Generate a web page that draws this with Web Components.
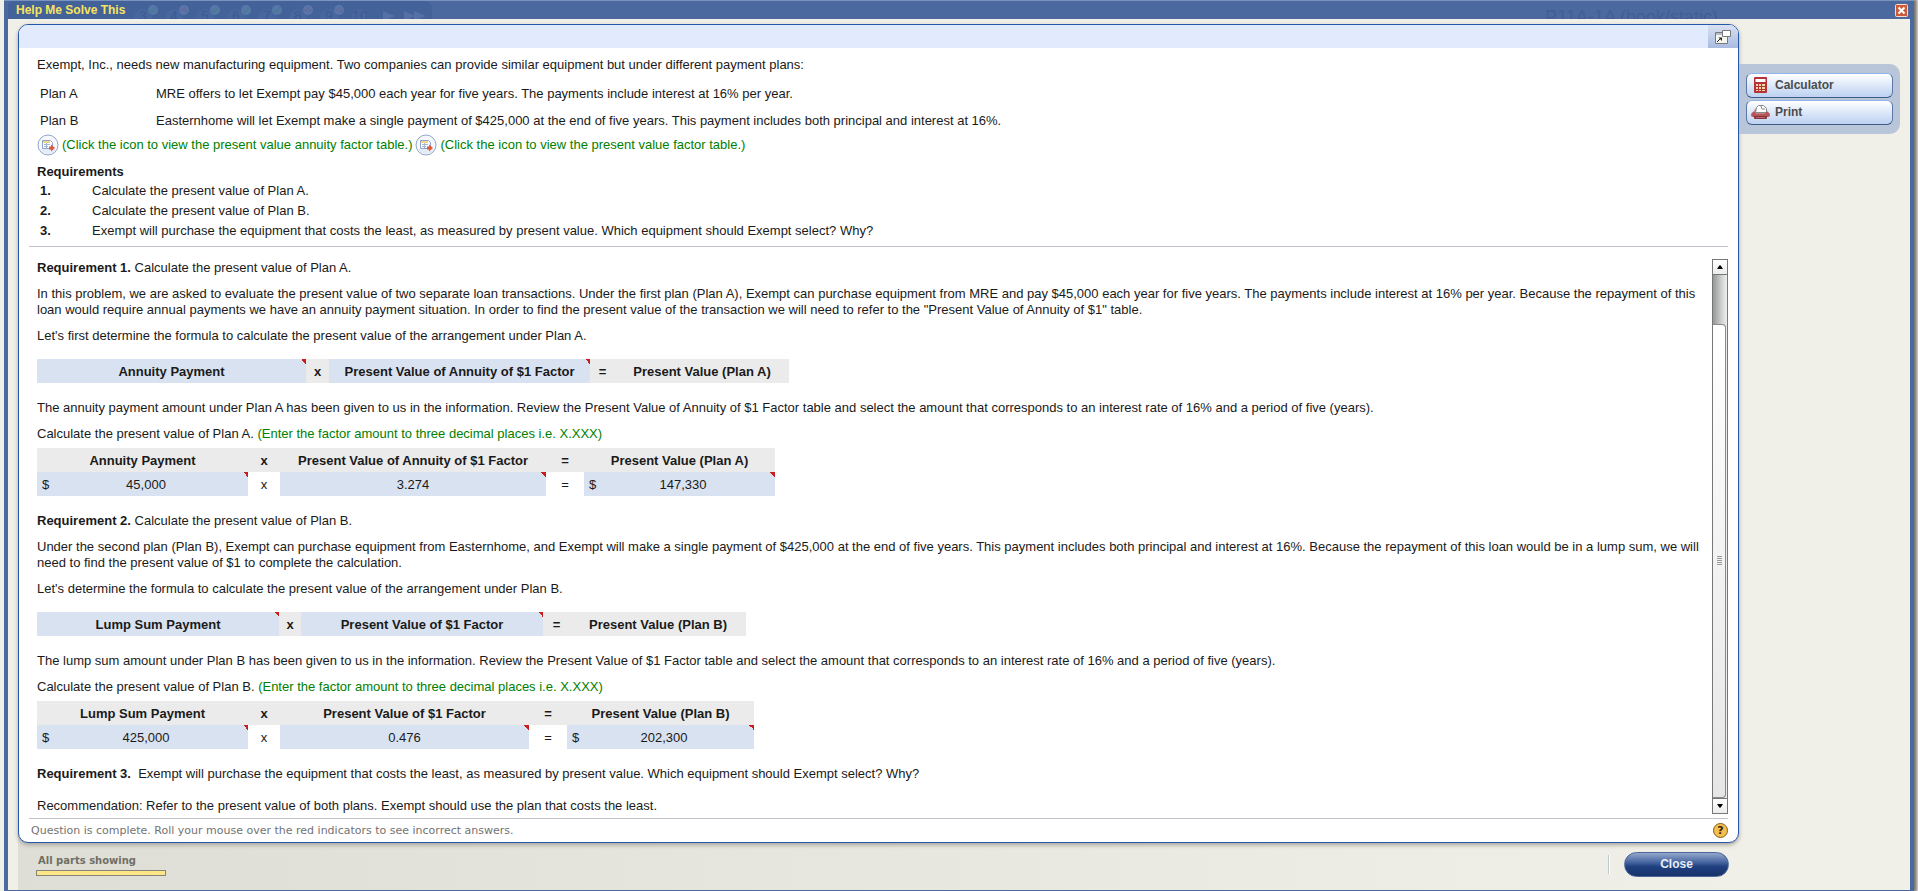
<!DOCTYPE html>
<html lang="en">
<head>
<meta charset="utf-8">
<title>Help Me Solve This</title>
<style>
  body {
    margin: 0;
    background: #f0f0e8;
    color: #1a1a1a;
    font: 13px/16px "Liberation Sans", Arial, sans-serif;
  }
</style>
</head>
<body>

<help-dialog>
  <question-panel>
    <problem-text slot="problem"></problem-text>
    <scroll-pane>
      <solution-steps></solution-steps>
    </scroll-pane>
  </question-panel>
  <tool-box slot="tools">
    <tool-button icon="calculator">Calculator</tool-button>
    <tool-button icon="print">Print</tool-button>
  </tool-box>
  <dialog-footer slot="footer"></dialog-footer>
</help-dialog>

<script>
// question navigation that shows faintly through the title bar
class TitleBar extends HTMLElement {
  constructor() {
    super();
    this.attachShadow({ mode: "open" });

    const check = x => `<circle cx="${x}" cy="9" r="5" fill="#5777a8"/><path d="M${x - 3} 9l2 3 4-6" fill="none" stroke="#3f7f88" stroke-width="1"/>`;
    const cross = x => `<circle cx="${x}" cy="9" r="5" fill="#5777a8"/><path d="M${x - 4} 8l2 2 3-4M${x} 8l4 4M${x + 4} 8l-4 4" fill="none" stroke="#6a6298" stroke-width="1"/>`;
    let steps = "";
    for (let n = 3; n <= 10; n++) {
      const x = 135 + (n - 3) * 31;
      steps += `<circle cx="${x}" cy="17" r="9" fill="#4866a0"/><text x="${x}" y="20" text-anchor="middle">${n}</text>`;
      if ([3, 5, 6, 7].includes(n)) steps += check(x + 10);
      if ([4, 8, 9].includes(n)) steps += cross(x + 10);
    }

    this.shadowRoot.innerHTML = `
    <style>
      :host {
        display: flex;
        align-items: center;
        height: 18px;
        background: #4b699f;
        border-top: 1px solid #7b94bd;
        position: relative;
        overflow: hidden;
      }
      h1 {
        margin: 0 auto 0 12px;
        font-size: 12px;
        line-height: 16px;
        color: #f8e45c;
        position: relative;
      }
      .nav {
        position: absolute;
        left: 4px;
        top: 0;
      }
      .nav text {
        font-size: 14px;
        fill: #3e5b8f;
      }
      .book {
        position: absolute;
        right: 196px;
        top: 6px;
        font-size: 18px;
        line-height: 20px;
        color: #425e92;
      }
      button {
        position: relative;
        width: 13px;
        height: 13px;
        padding: 0;
        margin-right: 6px;
        border: 0;
        background: none;
      }
      svg {
        display: block;
      }
    </style>
    <svg class="nav" width="424" height="18" aria-hidden="true">
      <path d="M0 18V6q0-6 6-6h410q8 0 8 8v10z" fill="#44629a"/>
      ${steps}
      <path d="M375 10l12 5-12 5zM396 10l11 5-11 5zM406 10l12 5-12 5z" fill="#5470a4"/>
    </svg>
    <span class="book" aria-hidden="true">P11A-1A (book/static)</span>
    <h1>Help Me Solve This</h1>
    <button aria-label="Close window">
      <svg width="13" height="13">
        <rect x=".5" y=".5" width="12" height="12" rx="1" fill="#cc5c39" stroke="#f7dccb"/>
        <path d="M3.5 3.5l6 6M9.5 3.5l-6 6" stroke="#fff" stroke-width="2"/>
      </svg>
    </button>
    `;
  }
}

class HelpDialog extends HTMLElement {
  constructor() {
    super();
    this.attachShadow({ mode: "open" });

    this.shadowRoot.innerHTML = `
    <style>
      :host {
        display: flex;
        flex-direction: column;
        box-sizing: border-box;
        min-height: 100vh;
        margin: 0 4px;
        border: solid #4b699f;
        border-width: 0 4px 1px;
        background: #f0f0e8;
        box-shadow: 2px 0 3px 1px #77776f;
        clip-path: inset(0 -4px 0 0);
      }
      title-bar {
        margin: 0 -4px;
      }
      .columns {
        flex: 1;
        display: flex;
        padding-left: 10px;
      }
      .main {
        flex: 1;
        min-width: 0;
        display: flex;
        flex-direction: column;
        padding-top: 5px;
        background: linear-gradient(to right, #deded6, #f0f0e8) bottom / 100% 60px no-repeat;
      }
      .side {
        flex: 0 0 171px;
        padding-top: 45px;
      }
    </style>
    <title-bar></title-bar>
    <div class="columns">
      <div class="main">
        <slot></slot>
        <slot name="footer"></slot>
      </div>
      <aside class="side"><slot name="tools"></slot></aside>
    </div>
    `;
  }
}

class QuestionPanel extends HTMLElement {
  constructor() {
    super();
    this.attachShadow({ mode: "open" });

    this.shadowRoot.innerHTML = `
    <style>
      :host {
        flex: 1;
        display: flex;
        flex-direction: column;
        border: 1px solid #2558ab;
        border-radius: 10px;
        overflow: hidden;
        background: #fff;
        box-shadow: 0 2px 4px #a5a59e;
      }
      .bar {
        height: 23px;
        background: #e2ebfd;
        display: flex;
        justify-content: flex-end;
      }
      .bar button {
        width: 30px;
        padding: 0;
        border: 0;
        background: linear-gradient(#d9e1f1, #a9bbe0);
      }
      .bar svg {
        display: block;
        margin: 0 auto;
      }
      .body {
        flex: 1;
        display: flex;
        flex-direction: column;
        padding: 0 10px;
      }
      slot[name=problem]::slotted(*) {
        border-bottom: 1px solid #c2c2cb;
      }
      footer {
        display: flex;
        justify-content: space-between;
        align-items: center;
        height: 23px;
        padding-left: 2px;
        border-top: 1px solid #c2c2cb;
        font: 11px/16px "DejaVu Sans", Verdana, sans-serif;
        color: #737373;
      }
      .help {
        box-sizing: border-box;
        width: 15px;
        height: 15px;
        padding: 0;
        border: 1px solid #7e5c1c;
        border-radius: 50%;
        background: #f5be50;
        color: #33240a;
        font: bold 11px/13px "DejaVu Sans", sans-serif;
      }
    </style>
    <div class="bar">
      <button aria-label="Open in new window">
        <svg width="16" height="16">
          <path d="M.5 3.5h12v11H.5z" fill="#f6f6f0" stroke="#77797c"/>
          <path d="M1 4h7v2H1z" fill="#b5bccb"/>
          <path d="M7.5 1.5h8v6h-8z" fill="#fff" stroke="#77797c"/>
          <path d="M2 13l3-3" stroke="#222" stroke-width="1"/>
          <path d="M3.500 8.500H7V12z" fill="#222"/>
        </svg>
      </button>
    </div>
    <div class="body">
      <slot name="problem"></slot>
      <slot></slot>
      <footer>
        Question is complete. Roll your mouse over the red indicators to see incorrect answers.
        <button class="help" aria-label="Help">?</button>
      </footer>
    </div>
    `;
  }
}

class TableIcon extends HTMLElement {
  constructor() {
    super();
    this.attachShadow({ mode: "open" });

    this.shadowRoot.innerHTML = `
    <style>
      :host {
        display: block;
      }
      button {
        display: block;
        padding: 0;
        border: 0;
        background: none;
      }
      svg {
        display: block;
      }
    </style>
    <button aria-label="View factor table">
      <svg width="22" height="22">
        <circle cx="11" cy="11" r="10" fill="#f7f9fe" stroke="#91a5cc"/>
        <path d="M3 15a9 9 0 0 0 16 0z" fill="#e6ebf6"/>
        <path d="M5.500 6.500h8l2 2v6h-10z" fill="#fff" stroke="#8fa3cc"/>
        <path d="M6 7h7v2H6z" fill="#f2d681"/>
        <path d="M7 10.500h6M7 12.500h4M9.500 9v5" stroke="#a3b4d8" fill="none"/>
        <path d="M12 12.500h2v-2l4 3.500-4 3.500v-2h-2z" fill="#df593d"/>
      </svg>
    </button>
    `;
  }
}

class ProblemText extends HTMLElement {
  constructor() {
    super();
    this.attachShadow({ mode: "open" });

    this.shadowRoot.innerHTML = `
    <style>
      :host {
        display: block;
        padding: 9px 8px 7px;
      }
      p, h2, ol, dl, dd {
        margin: 0;
      }
      dl {
        display: grid;
        grid-template-columns: 116px 1fr;
        row-gap: 11px;
        margin: 13px 3px 5px;
      }
      .links {
        display: flex;
        align-items: center;
        gap: 3px;
        color: #008000;
      }
      h2 {
        font-size: 13px;
        line-height: 16px;
        margin-top: 8px;
      }
      ol {
        list-style: none;
        display: grid;
        gap: 4px;
        padding: 3px 0 0 3px;
      }
      li {
        display: flex;
      }
      li b {
        width: 52px;
      }
    </style>
    <p>Exempt, Inc., needs new manufacturing equipment. Two companies can provide similar equipment but under different payment plans:</p>
    <dl>
      <dt>Plan A</dt>
      <dd>MRE offers to let Exempt pay $45,000 each year for five years. The payments include interest at 16% per year.</dd>
      <dt>Plan B</dt>
      <dd>Easternhome will let Exempt make a single payment of $425,000 at the end of five years. This payment includes both principal and interest at 16%.</dd>
    </dl>
    <div class="links">
      <table-icon></table-icon>
      <span>(Click the icon to view the present value annuity factor table.)</span>
      <table-icon></table-icon>
      <span>(Click the icon to view the present value factor table.)</span>
    </div>
    <h2>Requirements</h2>
    <ol>
      <li><b>1.</b>Calculate the present value of Plan A.</li>
      <li><b>2.</b>Calculate the present value of Plan B.</li>
      <li><b>3.</b>Exempt will purchase the equipment that costs the least, as measured by present value. Which equipment should Exempt select? Why?</li>
    </ol>
    `;
  }
}

// attributes: cols (widths), head (labels) and, for a calculation, row (values)
class FactorTable extends HTMLElement {
  constructor() {
    super();
    this.attachShadow({ mode: "open" });
  }

  connectedCallback() {
    const cols = this.getAttribute("cols").split(" ");
    const head = this.getAttribute("head").split("|");
    const row = this.hasAttribute("row") ? this.getAttribute("row").split("|") : null;

    const headCells = head.map((text, i) => {
      const answer = !row && (i === 0 || i === 2);
      return `<th class="${answer ? "answer" : ""}">${text}</th>`;
    }).join("");

    const rowCells = (row || []).map((text, i) => {
      if (i % 2) return `<td>${text}</td>`;
      const money = text.startsWith("$");
      return `<td class="answer">${money ? `<div><span>$</span><span>${text.slice(1)}</span></div>` : text}</td>`;
    }).join("");

    this.shadowRoot.innerHTML = `
    <style>
      :host {
        display: block;
      }
      table {
        table-layout: fixed;
        width: 0;
        border-collapse: collapse;
        font-size: 13px;
        line-height: 16px;
      }
      th, td {
        box-sizing: border-box;
        height: 24px;
        padding: 2px 0 0;
        text-align: center;
      }
      th {
        background: #ebebeb;
      }
      .answer {
        background: linear-gradient(to top right, transparent 50%, #c81e1e 50%) right top / 5px 5px no-repeat #d9e2f1;
      }
      div {
        display: grid;
        grid-template-columns: 6px 1fr;
        padding: 0 4px 0 5px;
      }
    </style>
    <table>
      <colgroup>${cols.map(w => `<col style="width: ${w}px">`).join("")}</colgroup>
      <tr>${headCells}</tr>
      ${row ? `<tr>${rowCells}</tr>` : ""}
    </table>
    `;
  }
}

class SolutionSteps extends HTMLElement {
  constructor() {
    super();
    this.attachShadow({ mode: "open" });

    this.shadowRoot.innerHTML = `
    <style>
      :host {
        display: block;
        padding-top: 1px;
      }
      p {
        margin: 0 0 10px;
      }
      .hint {
        color: #008000;
      }
      .formula {
        margin: 15px 0 17px;
      }
      .calc {
        margin: -4px 0 17px;
      }
      .gap {
        margin-bottom: 16px;
      }
      p:last-child {
        margin-bottom: 0;
      }
    </style>
    <p><b>Requirement 1.</b> Calculate the present value of Plan A.</p>
    <p>In this problem, we are asked to evaluate the present value of two separate loan transactions. Under the first plan (Plan A), Exempt can purchase equipment from MRE and pay $45,000 each year for five years. The payments include interest at 16% per year. Because the repayment of this loan would require annual payments we have an annuity payment situation. In order to find the present value of the transaction we will need to refer to the "Present Value of Annuity of $1" table.</p>
    <p>Let's first determine the formula to calculate the present value of the arrangement under Plan A.</p>
    <factor-table class="formula" cols="269 23 261 25 174" head="Annuity Payment|x|Present Value of Annuity of $1 Factor|=|Present Value (Plan A)"></factor-table>
    <p>The annuity payment amount under Plan A has been given to us in the information. Review the Present Value of Annuity of $1 Factor table and select the amount that corresponds to an interest rate of 16% and a period of five (years).</p>
    <p>Calculate the present value of Plan A. <span class="hint">(Enter the factor amount to three decimal places i.e. X.XXX)</span></p>
    <factor-table class="calc" cols="211 32 266 38 191" head="Annuity Payment|x|Present Value of Annuity of $1 Factor|=|Present Value (Plan A)" row="$45,000|x|3.274|=|$147,330"></factor-table>
    <p><b>Requirement 2.</b> Calculate the present value of Plan B.</p>
    <p>Under the second plan (Plan B), Exempt can purchase equipment from Easternhome, and Exempt will make a single payment of $425,000 at the end of five years. This payment includes both principal and interest at 16%. Because the repayment of this loan would be in a lump sum, we will need to find the present value of $1 to complete the calculation.</p>
    <p>Let's determine the formula to calculate the present value of the arrangement under Plan B.</p>
    <factor-table class="formula" cols="242 22 242 27 176" head="Lump Sum Payment|x|Present Value of $1 Factor|=|Present Value (Plan B)"></factor-table>
    <p>The lump sum amount under Plan B has been given to us in the information. Review the Present Value of $1 Factor table and select the amount that corresponds to an interest rate of 16% and a period of five (years).</p>
    <p>Calculate the present value of Plan B. <span class="hint">(Enter the factor amount to three decimal places i.e. X.XXX)</span></p>
    <factor-table class="calc" cols="211 32 249 38 187" head="Lump Sum Payment|x|Present Value of $1 Factor|=|Present Value (Plan B)" row="$425,000|x|0.476|=|$202,300"></factor-table>
    <p class="gap"><b>Requirement 3.</b>&nbsp; Exempt will purchase the equipment that costs the least, as measured by present value. Which equipment should Exempt select? Why?</p>
    <p>Recommendation: Refer to the present value of both plans. Exempt should use the plan that costs the least.</p>
    `;
  }
}

class ScrollPane extends HTMLElement {
  constructor() {
    super();
    this.attachShadow({ mode: "open" });

    this.shadowRoot.innerHTML = `
    <style>
      :host {
        flex: 1;
        display: flex;
        gap: 3px;
        padding: 12px 0 4px 8px;
      }
      .content {
        flex: 1;
        min-width: 0;
      }
      .scrollbar {
        box-sizing: border-box;
        width: 16px;
        display: flex;
        flex-direction: column;
        border: 1px solid #777;
      }
      button {
        height: 15px;
        padding: 0;
        border: 0;
        border-bottom: 1px solid #777;
        background: linear-gradient(#fff, #ececec);
      }
      button:last-child {
        border-bottom: 0;
        border-top: 1px solid #777;
      }
      button svg {
        display: block;
        margin: 0 auto;
      }
      .track {
        flex: 1;
        display: flex;
        flex-direction: column;
        padding-right: 1px;
        background: linear-gradient(to right, #949899, #d8d8d8 70%, #eee);
      }
      .thumb {
        flex: 1;
        display: flex;
        align-items: center;
        justify-content: center;
        margin-top: 49px;
        border: 1px solid #8a8a8a;
        border-width: 1px 1px 1px 0;
        border-radius: 0 4px 4px 0;
        background: linear-gradient(#fff, #e6e6e6);
      }
    </style>
    <div class="content"><slot></slot></div>
    <div class="scrollbar">
      <button aria-label="Scroll up"><svg width="6" height="4"><path d="M0 4l2-3 1-1 1 1 2 3z"/></svg></button>
      <div class="track">
        <div class="thumb">
          <svg width="5" height="10"><path d="M0 .5h5M0 2.500h5M0 4.500h5M0 6.500h5M0 8.500h5" stroke="#999"/></svg>
        </div>
      </div>
      <button aria-label="Scroll down"><svg width="6" height="4"><path d="M0 0l2 3 1 1 1-1 2-3z"/></svg></button>
    </div>
    `;
  }
}

class ToolBox extends HTMLElement {
  constructor() {
    super();
    this.attachShadow({ mode: "open" });

    this.shadowRoot.innerHTML = `
    <style>
      :host {
        display: grid;
        gap: 2px;
        margin-right: 10px;
        padding: 9px 7px;
        border-radius: 0 10px 10px 0;
        background: #b9c5d9;
      }
    </style>
    <slot></slot>
    `;
  }
}

const toolIcons = {
  calculator: `
    <svg width="19" height="18">
      <rect x="3" y="1" width="13" height="16" rx="1" fill="#b53338"/>
      <path d="M4.500 3h10v3h-10z" fill="#fff"/>
      <path d="M5 8h2v2H5zM8 8h2v2H8zM11 8h3v2h-3zM5 11h2v2H5zM8 11h2v2H8zM11 11h3v2h-3zM5 14h2v1H5zM8 14h2v1H8zM11 14h3v1h-3z" fill="#f2d7a0"/>
    </svg>`,
  print: `
    <svg width="19" height="18">
      <path d="M2 9l3-4h9l3 4v2H2z" fill="#c98284"/>
      <path d="M4.500 9.500l1-5 2-2h5l3 3v4z" fill="#fff" stroke="#888"/>
      <path d="M10 3l1 3h3" fill="none" stroke="#888"/>
      <path d="M2 9h2l1 2h9l1-2h2q2 1 2 3t-2 2H2q-2 0-2-2t2-3z" fill="#b4555a"/>
      <path d="M3 13h13v2q0 1-1 1H4q-1 0-1-1z" fill="#8a3438"/>
      <path d="M5 14.500h9" stroke="#b4686b"/>
    </svg>`
};

class ToolButton extends HTMLElement {
  constructor() {
    super();
    this.attachShadow({ mode: "open" });

    this.shadowRoot.innerHTML = `
    <style>
      :host {
        display: block;
      }
      button {
        display: flex;
        align-items: center;
        gap: 5px;
        box-sizing: border-box;
        width: 100%;
        height: 25px;
        padding: 0 0 1px 4px;
        border: 1px solid #5b78a6;
        border-top: 1px solid #8fb3ec;
        border-bottom-color: #3f5a86;
        border-radius: 6px;
        background: linear-gradient(#fff, #d6e3f7 60%, #bcd2f1);
        color: #4c4c4c;
        font: bold 12px/16px "Liberation Sans", Arial, sans-serif;
      }
    </style>
    <button>${toolIcons[this.getAttribute("icon")] || ""}<slot></slot></button>
    `;
  }
}

class DialogFooter extends HTMLElement {
  constructor() {
    super();
    this.attachShadow({ mode: "open" });

    this.shadowRoot.innerHTML = `
    <style>
      :host {
        display: flex;
        align-items: center;
        height: 47px;
        padding: 0 10px 4px 18px;
        box-sizing: border-box;
      }
      .progress {
        width: 130px;
        margin-right: auto;
      }
      .label {
        padding: 0 2px;
        font: bold 10px/14px "DejaVu Sans", Verdana, sans-serif;
        color: #6f6f65;
      }
      .meter {
        box-sizing: border-box;
        height: 6px;
        margin-top: 2px;
        border: 1px solid #85857b;
        background: #fee585;
      }
      .divider {
        width: 1px;
        height: 19px;
        margin-right: 14px;
        background: #c1c7d2;
        border-right: 1px solid #fff;
      }
      button {
        width: 105px;
        height: 25px;
        padding: 0 0 2px;
        border: 1px solid #4d679a;
        border-radius: 13px;
        background: linear-gradient(#94a8cc, #4665a0 40%, #1f3f7e 60%, #17336b);
        color: #e8edf6;
        font: bold 12px/16px "Liberation Sans", Arial, sans-serif;
      }
    </style>
    <div class="progress">
      <div class="label">All parts showing</div>
      <div class="meter"></div>
    </div>
    <div class="divider"></div>
    <button>Close</button>
    `;
  }
}

customElements.define("title-bar", TitleBar);
customElements.define("help-dialog", HelpDialog);
customElements.define("question-panel", QuestionPanel);
customElements.define("table-icon", TableIcon);
customElements.define("problem-text", ProblemText);
customElements.define("factor-table", FactorTable);
customElements.define("solution-steps", SolutionSteps);
customElements.define("scroll-pane", ScrollPane);
customElements.define("tool-box", ToolBox);
customElements.define("tool-button", ToolButton);
customElements.define("dialog-footer", DialogFooter);
</script>
</body>
</html>
